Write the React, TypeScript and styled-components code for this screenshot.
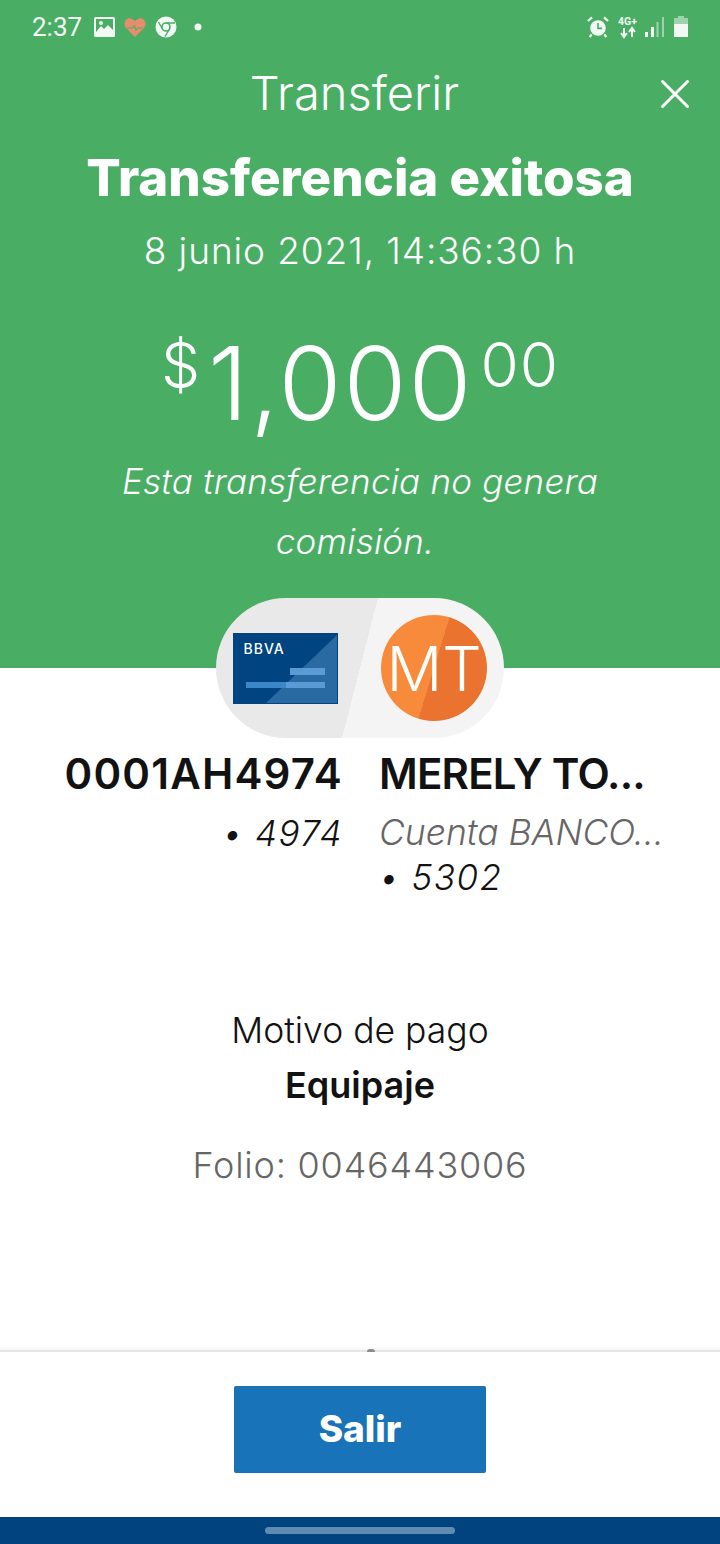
import { createGlobalStyle } from 'styled-components';
import styled from 'styled-components';

const GlobalStyle = createGlobalStyle`
  html, body {
    margin: 0;
    padding: 0;
    background: #ffffff;
  }
  * {
    box-sizing: border-box;
  }
`;

const Screen = styled.div`
  width: 720px;
  height: 1544px;
  display: flex;
  flex-direction: column;
  overflow: hidden;
  font-family: Inter, 'Liberation Sans', sans-serif;
  color: #121212;
  background: #ffffff;
`;

const GreenHeader = styled.section`
  height: 668px;
  flex-shrink: 0;
  background: #49ae64;
  color: #ffffff;
  display: flex;
  flex-direction: column;
`;

const StatusBar = styled.div`
  height: 54px;
  padding: 0 32px;
  display: flex;
  align-items: center;
  justify-content: space-between;
`;

const StatusGroup = styled.div`
  display: flex;
  align-items: center;
  gap: 9px;
`;

const Clock = styled.span`
  font-family: Roboto, sans-serif;
  font-size: 26px;
  margin-right: 3px;
  opacity: 0.95;
`;

const StatusDot = styled.svg`
  margin-left: 8px;
`;

const SignalIcon = styled.svg`
  margin-left: -4px;
`;

const TitleRow = styled.div`
  height: 80px;
  position: relative;
  display: flex;
  align-items: center;
  justify-content: center;
`;

const Title = styled.h1`
  margin: -3px 11px 0 0;
  font-size: 47px;
  font-weight: 300;
`;

const CloseButton = styled.button`
  position: absolute;
  right: 30px;
  top: 25px;
  padding: 0;
  border: none;
  background: none;
  display: flex;
  color: #ffffff;
`;

const Heading = styled.h2`
  margin: 0;
  height: 88px;
  line-height: 88px;
  text-align: center;
  font-size: 51px;
  font-weight: 800;
`;

const DateLine = styled.div`
  text-align: center;
  font-size: 37px;
  letter-spacing: 0.9px;
  font-weight: 300;
  line-height: 58px;
`;

const Amount = styled.div`
  margin-top: 48px;
  height: 110px;
  display: flex;
  justify-content: center;
  align-items: flex-start;
  gap: 7px;
  font-weight: 300;
`;

const AmountSmall = styled.span`
  font-size: 62px;
  line-height: 62px;
  letter-spacing: 1px;
  margin-top: 6px;
`;

const AmountMain = styled.span`
  font-size: 102px;
  line-height: 110px;
  letter-spacing: 2px;
`;

const Note = styled.p`
  margin: 13px auto 0;
  width: 520px;
  text-align: center;
  font-size: 35px;
  letter-spacing: 0.2px;
  line-height: 60px;
  font-style: italic;
  font-weight: 300;
`;

const Content = styled.main`
  flex: 1;
  display: flex;
  flex-direction: column;
  align-items: center;
`;

const Pill = styled.div`
  width: 288px;
  height: 140px;
  margin-top: -70px;
  border-radius: 70px;
  overflow: hidden;
  display: flex;
  align-items: center;
  background: linear-gradient(104.4deg, #e9e9ea 0 50%, #f4f4f4 50% 100%);
`;

const CardIcon = styled.svg`
  margin-left: 17px;
`;

const Avatar = styled.div`
  width: 106px;
  height: 106px;
  margin-left: 43px;
  border-radius: 50%;
  display: flex;
  align-items: center;
  justify-content: center;
  color: #ffffff;
  font-size: 62px;
  font-weight: 300;
  background: linear-gradient(107deg, #f78b3b 0 50%, #ea7330 50% 100%);
`;

const Accounts = styled.div`
  width: 100%;
  margin-top: 12px;
  display: grid;
  grid-template-columns: 343px 281px;
  column-gap: 36px;
`;

const Account = styled.div<{ $alignRight?: boolean }>`
  min-width: 0;
  text-align: ${(p) => (p.$alignRight ? 'right' : 'left')};
`;

const AccountName = styled.div<{ $spacing: number }>`
  font-size: 42px;
  letter-spacing: ${(p) => p.$spacing}px;
  font-weight: 600;
  line-height: 48px;
  white-space: nowrap;
`;

const AccountBank = styled.div`
  font-size: 35.5px;
  line-height: 44px;
  margin-top: 13px;
  font-style: italic;
  font-weight: 300;
  color: #666666;
  white-space: nowrap;
`;

const AccountNumber = styled.div<{ $tight?: boolean }>`
  font-size: 35px;
  letter-spacing: 1.5px;
  line-height: 44px;
  margin-top: ${(p) => (p.$tight ? '0' : '13px')};
  font-style: italic;
  font-weight: 300;
`;

const Motive = styled.div`
  margin-top: 105px;
  font-size: 35.5px;
  line-height: 54px;
  font-weight: 300;
`;

const MotiveValue = styled.div`
  font-size: 36px;
  line-height: 54px;
  font-weight: 600;
`;

const Folio = styled.div`
  margin-top: 26px;
  font-size: 36px;
  letter-spacing: 0.8px;
  line-height: 54px;
  font-weight: 300;
  color: #666666;
`;

const Footer = styled.footer`
  height: 167px;
  flex-shrink: 0;
  position: relative;
  border-top: 2px solid #e6e6e6;
  box-shadow: 0 -2px 3px rgba(0, 0, 0, 0.04);
  display: flex;
  justify-content: center;
  padding-top: 34px;
`;

const ScrollNub = styled.div`
  position: absolute;
  left: 367px;
  top: -3px;
  width: 8px;
  height: 3px;
  border-radius: 4px 4px 0 0;
  background: #8c8c8c;
`;

const ExitButton = styled.button`
  width: 252px;
  height: 87px;
  padding: 0 0 3px;
  border: none;
  border-radius: 2px;
  background: #1973b8;
  color: #ffffff;
  font-family: inherit;
  font-size: 37px;
  font-weight: 800;
`;

const NavBar = styled.div`
  height: 27px;
  flex-shrink: 0;
  background: #00437f;
  display: flex;
  justify-content: center;
  padding-top: 10px;
`;

const NavHandle = styled.div`
  width: 190px;
  height: 7px;
  border-radius: 4px;
  background: #5f8bb3;
`;

export default function App() {
  return (
    <>
      <GlobalStyle />
      <Screen>
        <GreenHeader>
          <StatusBar>
            <StatusGroup>
              <Clock>2:37</Clock>
              <svg width="21" height="20" viewBox="0 0 21 20">
                <rect width="21" height="20" rx="1.5" fill="#f2f8f3" />
                <rect x="2" y="2" width="17" height="16" fill="#49ae64" />
                <path d="M2 18 V15 L7 9 L10 12 L14 8 L19 13 V18 Z" fill="#f2f8f3" />
                <circle cx="7" cy="6" r="2" fill="#f2f8f3" />
              </svg>
              <svg width="22" height="19" viewBox="0 0 22 19">
                <path d="M11 19 L2 10 C-2 5 3 -2 8 1 L11 3 L14 1 C19 -2 24 5 20 10 Z" fill="#e58d6c" />
                <path d="M3 10 H9 L10.5 7 L12 12.5 L13.5 10 H19" fill="none" stroke="#49ae64" strokeWidth="1" />
              </svg>
              <svg width="22" height="22" viewBox="0 0 22 22">
                <circle cx="11" cy="11" r="10.5" fill="#f2f8f3" />
                <circle cx="11" cy="11" r="4" fill="none" stroke="#49ae64" strokeWidth="1.6" />
                <path d="M11 7 H20 M7.5 13 L3.5 6 M14.5 13 L10 20.5" stroke="#49ae64" strokeWidth="1.4" />
              </svg>
              <StatusDot width="8" height="8" viewBox="0 0 8 8">
                <circle cx="4" cy="4" r="3.5" fill="#f2f8f3" />
              </StatusDot>
            </StatusGroup>
            <StatusGroup>
              <svg width="22" height="22" viewBox="0 0 24 24">
                <circle cx="12" cy="13" r="8.5" fill="#f2f8f3" />
                <path d="M12 7.5 V13.5 H16.5" fill="none" stroke="#49ae64" strokeWidth="1.8" />
                <path d="M1 5.5 L5.5 1.5 M23 5.5 L18.5 1.5 M5 20 L3 23 M19 20 L21 23" stroke="#f2f8f3" strokeWidth="2.4" />
              </svg>
              <svg width="22" height="24" viewBox="0 0 22 24">
                <text x="0" y="10" fontFamily="Roboto, sans-serif" fontWeight="700" fontSize="10.5" fill="#f2f8f3">4G+</text>
                <path d="M6 13 V21 M3 18 L6 22 L9 18 M14 22 V14 M11 17 L14 13 L17 17" fill="none" stroke="#f2f8f3" strokeWidth="2" />
              </svg>
              <SignalIcon width="20" height="22" viewBox="0 0 20 22">
                <rect x="0" y="16" width="3" height="5" fill="#f2f8f3" />
                <rect x="6" y="11" width="3" height="10" fill="#f2f8f3" />
                <rect x="11.5" y="6" width="2" height="15" fill="#9fd3ad" />
                <rect x="17" y="1" width="2" height="20" fill="#9fd3ad" />
              </SignalIcon>
              <svg width="14" height="22" viewBox="0 0 14 22">
                <path d="M4 0 H10 V2 H14 V21 H0 V2 H4 Z" fill="#9fd3ad" />
                <rect y="8" width="14" height="13" fill="#f2f8f3" />
              </svg>
            </StatusGroup>
          </StatusBar>
          <TitleRow>
            <Title>Transferir</Title>
            <CloseButton aria-label="Cerrar">
              <svg width="30" height="30" viewBox="0 0 30 30">
                <path d="M2.5 2.5 L27.5 27.5 M27.5 2.5 L2.5 27.5" stroke="currentColor" strokeWidth="3" strokeLinecap="round" />
              </svg>
            </CloseButton>
          </TitleRow>
          <Heading>Transferencia exitosa</Heading>
          <DateLine>8 junio 2021, 14:36:30 h</DateLine>
          <Amount>
            <AmountSmall>$</AmountSmall>
            <AmountMain>1,000</AmountMain>
            <AmountSmall>00</AmountSmall>
          </Amount>
          <Note>Esta transferencia no genera comisión.{'\u00a0'}</Note>
        </GreenHeader>
        <Content>
          <Pill>
            <CardIcon width="105" height="71" viewBox="0 0 105 71">
              <rect width="105" height="71" fill="#004481" />
              <path d="M104 2 V70 H33 Z" fill="#2a6aa3" />
              <rect x="57" y="35" width="35" height="7" fill="#5b9bd5" />
              <rect x="13" y="49" width="40" height="6" fill="#3a86c8" />
              <rect x="53" y="49" width="39" height="6" fill="#5b9bd5" />
              <text x="10.5" y="21" fontFamily="Inter, sans-serif" fontWeight="500" fontSize="14" letterSpacing="1" fill="#ffffff">BBVA</text>
            </CardIcon>
            <Avatar>MT</Avatar>
          </Pill>
          <Accounts>
            <Account $alignRight>
              <AccountName $spacing={1.2}>0001AH4974</AccountName>
              <AccountNumber>• 4974</AccountNumber>
            </Account>
            <Account>
              <AccountName $spacing={-0.8}>MERELY TO...</AccountName>
              <AccountBank>Cuenta BANCO...</AccountBank>
              <AccountNumber $tight>• 5302</AccountNumber>
            </Account>
          </Accounts>
          <Motive>Motivo de pago</Motive>
          <MotiveValue>Equipaje</MotiveValue>
          <Folio>Folio: 0046443006</Folio>
        </Content>
        <Footer>
          <ScrollNub />
          <ExitButton>Salir</ExitButton>
        </Footer>
        <NavBar>
          <NavHandle />
        </NavBar>
      </Screen>
    </>
  );
}
